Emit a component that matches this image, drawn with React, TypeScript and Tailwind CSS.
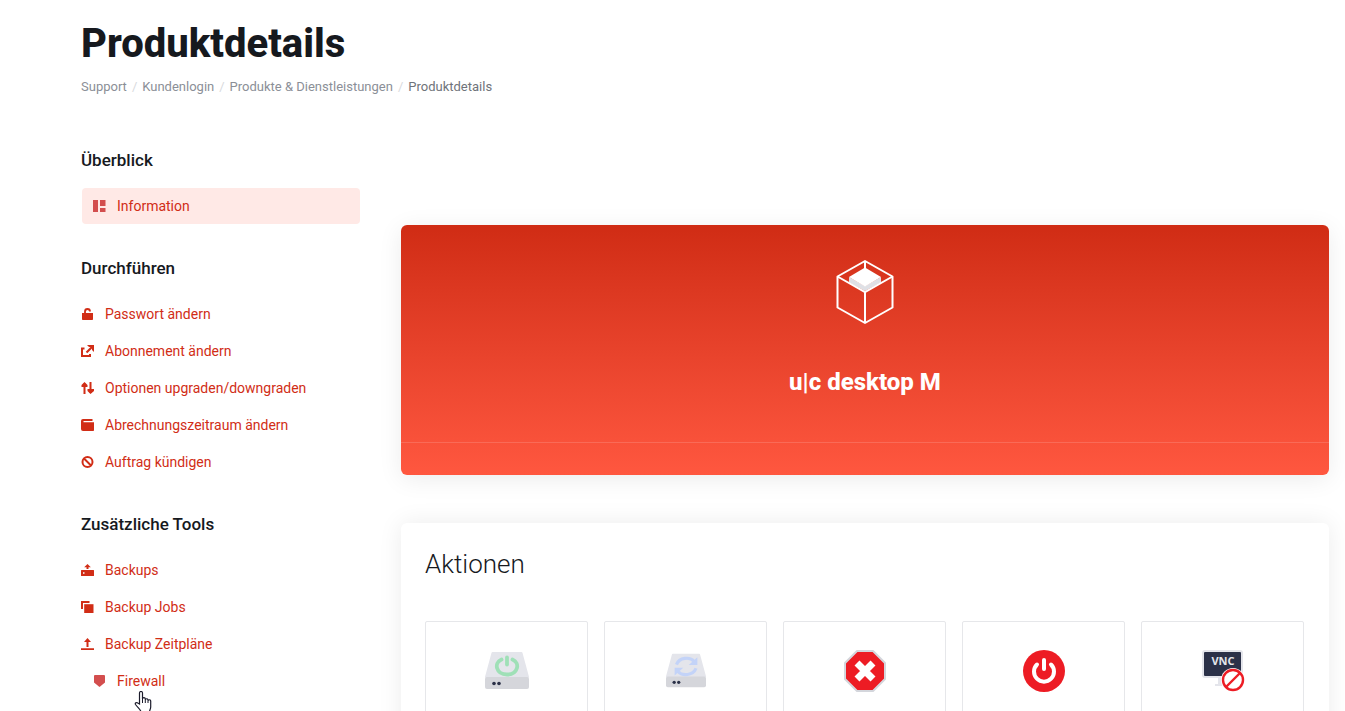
import React from 'react';

interface NavItem {
  label: string;
  icon: React.ReactNode;
  active?: boolean;
  hovered?: boolean;
}

interface NavSection {
  title: string;
  items: NavItem[];
}

const sections: NavSection[] = [
  {
    title: 'Überblick',
    items: [
      {
        label: 'Information',
        active: true,
        icon: <path d="M0 0h5v12H0zM7 0h5.500v6H7zM7 8h5.500v4H7z" />,
      },
    ],
  },
  {
    title: 'Durchführen',
    items: [
      {
        label: 'Passwort ändern',
        icon: (
          <>
            <path d="M1 5h11v6.2a.8.8 0 0 1-.8.8H1.800a.8.8 0 0 1-.8-.8z" />
            <path d="M4 6V3.500a2.500 2.500 0 0 1 5 0" fill="none" stroke="currentColor" strokeWidth="1.800" />
          </>
        ),
      },
      {
        label: 'Abonnement ändern',
        icon: (
          <>
            <path d="M3.500 3.500H1V11h8V9" fill="none" stroke="currentColor" strokeWidth="2" />
            <path d="M5.500 7.500 11 2" fill="none" stroke="currentColor" strokeWidth="2.200" />
            <path d="M6 0h7v7l-2-2V2H8z" />
          </>
        ),
      },
      {
        label: 'Optionen upgraden/downgraden',
        icon: (
          <>
            <path d="M2.500 1.500h2V12h-2zM8.500 0h2v11h-2z" />
            <path d="M3.500 0 6.500 3v2h-6V3zM9.500 12l3.500-3V7H6.500v2z" />
          </>
        ),
      },
      {
        label: 'Abrechnungszeitraum ändern',
        icon: <path d="M2 0h9.500v2H2.500v1.200H13v8a.8.8 0 0 1-.8.8H2a2 2 0 0 1-2-2V2a2 2 0 0 1 2-2z" />,
      },
      {
        label: 'Auftrag kündigen',
        icon: (
          <g fill="none" stroke="currentColor" strokeWidth="2">
            <circle cx="6.500" cy="6" r="5" />
            <path d="m3 2.500 7 7" />
          </g>
        ),
      },
    ],
  },
  {
    title: 'Zusätzliche Tools',
    items: [
      {
        label: 'Backups',
        icon: (
          <>
            <path d="M5.500 2h2v3h-2z" />
            <path d="M6.500 0 9.800 3.200H3.200z" />
            <path
              fillRule="evenodd"
              d="M.5 6h12a.5.5 0 0 1 .5.5v5a.5.5 0 0 1-.5.5H.5a.5.5 0 0 1-.5-.5v-5A.5.5 0 0 1 .5 6zM2 8.200v1.600h1.500V8.200z"
            />
          </>
        ),
      },
      {
        label: 'Backup Jobs',
        icon: (
          <>
            <path d="M0 0h8.500v2H2v6H0z" />
            <path d="M3.200 3.200H12.500V12H3.200z" />
          </>
        ),
      },
      {
        label: 'Backup Zeitpläne',
        icon: (
          <>
            <path d="M5.500 2h2v7h-2zM0 10.300h13V12H0z" />
            <path d="M6.500 0 10 4H3z" />
          </>
        ),
      },
      {
        label: 'Firewall',
        hovered: true,
        icon: <path d="M1 1a1 1 0 0 1 1-1h9a1 1 0 0 1 1 1v6.500L6.500 12 1 7.500z" />,
      },
    ],
  },
];

const breadcrumbs = ['Support', 'Kundenlogin', 'Produkte & Dienstleistungen'];

const DriveBody = () => (
  <>
    <path d="M9.500 3h29L45 27H3z" fill="#e4e5eb" stroke="#e4e5eb" strokeWidth="2" strokeLinejoin="round" />
    <rect x="2" y="27" width="44" height="12" rx="2" fill="#d5d6db" />
    <circle cx="11" cy="33.500" r="1.800" fill="#2b3148" />
    <circle cx="16" cy="33.500" r="1.800" fill="#2b3148" />
  </>
);

const StartIcon = () => (
  <svg viewBox="1 0 46 42" className="h-[42px] w-[46px]">
    <DriveBody />
    <g fill="none" stroke="#9fe0b7" strokeWidth="3.800" strokeLinecap="round">
      <path d="M24 7.500v7" />
      <path d="M18.500 9.500C10.500 13 13 24.500 24 24.500S37.500 13 29.500 9.500" />
    </g>
  </svg>
);

const RebootIcon = () => (
  <svg viewBox="2 0 44 42" className="h-10 w-10">
    <DriveBody />
    <g fill="none" stroke="#c3d3f8" strokeWidth="3.500">
      <path d="M13.500 14C16.500 6 28.500 5 33 10.500" />
      <path d="M35 18C32 26 20 27 15 21.500" />
    </g>
    <path d="M36.500 6v8.500H27zM11.500 26v-8.500H21z" fill="#c3d3f8" />
  </svg>
);

const StopIcon = () => (
  <svg viewBox="0 0 42 42" className="size-[42px]">
    <path d="M13 1h16l12 12v16L29 41H13L1 29V13z" fill="#ed1c24" stroke="#d4d6dc" strokeWidth="2" strokeLinejoin="round" />
    <path d="m13 13 16 16m0-16-16 16" stroke="#fff" strokeWidth="7" />
  </svg>
);

const ShutdownIcon = () => (
  <svg viewBox="0 0 42 42" className="size-[42px]">
    <circle cx="21" cy="21" r="21" fill="#ed1c24" />
    <g fill="none" stroke="#fff" strokeWidth="4" strokeLinecap="round">
      <path d="M21 10v9" />
      <path d="M14 14.500a10 10 0 1 0 14 0" />
    </g>
  </svg>
);

const VncIcon = () => (
  <svg viewBox="0 0 44 44" className="size-11">
    <path d="M17 29h8v5h4v3H14v-2h3z" fill="#e4e5eb" />
    <rect x="1" y="1" width="41" height="28" rx="3" fill="#e4e5eb" />
    <rect x="3" y="3" width="37" height="24" rx="1" fill="#2b3148" />
    <text
      x="22"
      y="16"
      textAnchor="middle"
      fill="#e4e5eb"
      className="font-['Open_Sans',sans-serif] text-[11px] font-bold"
    >
      VNC
    </text>
    <circle cx="32" cy="31" r="12" fill="#fff" />
    <g fill="none" stroke="#ed1c24" strokeWidth="2.400">
      <circle cx="32" cy="31" r="10" />
      <path d="m25 38 14-14" />
    </g>
  </svg>
);

const actions = [
  { name: 'Start', icon: <StartIcon /> },
  { name: 'Reboot', icon: <RebootIcon /> },
  { name: 'Stop', icon: <StopIcon /> },
  { name: 'Shutdown', icon: <ShutdownIcon /> },
  { name: 'VNC', icon: <VncIcon /> },
];

const HandCursor = () => (
  <svg viewBox="0 0 18 22" className="pointer-events-none absolute top-7 left-[53px] h-[22px] w-[18px]">
    <path
      d="M5.500 13V2a1.500 1.500 0 0 1 3 0v6a1.400 1.400 0 0 1 2.800 0v.8a1.400 1.400 0 0 1 2.700 0v1a1.400 1.400 0 0 1 2.700 0V16c0 2-1.200 3-1.200 5H7c0-2-3-4-5.500-7.500-.8-1.500 1-2.500 2.300-1.500z"
      fill="#fff"
      stroke="#1b1b2b"
      strokeWidth="1.200"
    />
    <path d="M8.500 8v4M11.300 8.800V12M14 9.800V12" stroke="#1b1b2b" strokeWidth="1" />
  </svg>
);

const NavLink: React.FC<{ item: NavItem }> = ({ item }) => {
  const inset = item.active || item.hovered;

  return (
    <li className="relative">
      <a
        href="#"
        className={`flex h-9 items-center gap-[11px] rounded text-sm text-[#d12d16] ${
          inset ? 'mx-px pl-[11px]' : ''
        } ${item.active ? 'bg-[#ffe9e6]' : ''}`}
      >
        <svg
          viewBox="0 0 13 12"
          fill="currentColor"
          className={`h-3 w-[13px] shrink-0 ${inset ? 'text-[#d34e4e]' : ''}`}
        >
          {item.icon}
        </svg>
        <span>{item.label}</span>
      </a>
      {item.hovered && <HandCursor />}
    </li>
  );
};

export default function App() {
  return (
    <div className="h-screen overflow-hidden bg-white pr-4 pl-[81px] font-[Roboto,sans-serif] text-[#16191e]">
      <header className="pt-5">
        <h1 className="text-[40px] leading-12 font-extrabold">Produktdetails</h1>
        <nav aria-label="Breadcrumb" className="mt-[9px]">
          <ol className="flex text-[13px] leading-5 text-[#8b8f97]">
            {breadcrumbs.map((crumb) => (
              <li key={crumb} className="flex">
                <a href="#">{crumb}</a>
                <span className="px-[5px] text-[#d8dadd]">/</span>
              </li>
            ))}
            <li className="text-[#6f737a]">Produktdetails</li>
          </ol>
        </nav>
      </header>

      <div className="flex gap-10 pt-[52px]">
        <aside className="w-[280px] shrink-0">
          <nav className="flex flex-col gap-[33px]">
            {sections.map((section) => (
              <section key={section.title}>
                <h2 className="text-[17px] leading-[23px] font-medium">{section.title}</h2>
                <ul className="mt-4 flex flex-col gap-px">
                  {section.items.map((item) => (
                    <NavLink key={item.label} item={item} />
                  ))}
                </ul>
              </section>
            ))}
          </nav>
        </aside>

        <main className="flex min-w-0 flex-1 flex-col gap-12 pt-[76px]">
          <section className="rounded-md bg-linear-to-b from-[#d02c14] to-[#ff573f] shadow-[0_4px_24px_rgba(0,0,0,0.08)]">
            <div className="flex h-[218px] flex-col items-center border-b border-white/15 pt-[34px]">
              <svg viewBox="0 0 60 66" className="h-[66px] w-[60px]" fill="none">
                <g stroke="#fff" strokeWidth="2" strokeLinejoin="round">
                  <path d="M30 2 57.500 17.500v31L30 64 2.500 48.500v-31z" />
                  <path d="M30 2v9" />
                </g>
                <path d="M14 18 30 27l16-9v5.500L30 32l-16-8.500z" fill="#dfe0e5" />
                <path d="M30 8.500 46 18l-16 9.500L14 18z" fill="#fff" />
                <path d="M2.500 17.500 30 33l27.500-15.500M30 33v31" stroke="#fff" strokeWidth="2" />
              </svg>
              <h2 className="mt-[41px] text-2xl leading-8 font-extrabold text-white">u|c desktop M</h2>
            </div>
            <div className="h-8" />
          </section>

          <section className="rounded-md bg-white py-6 pr-[25px] pl-6 shadow-[0_0_24px_rgba(0,0,0,0.08)]">
            <h2 className="text-[26px] leading-[34px] font-light">Aktionen</h2>
            <div className="mt-10 grid grid-cols-5 gap-4">
              {actions.map((action) => (
                <button
                  key={action.name}
                  type="button"
                  aria-label={action.name}
                  className="flex h-[100px] items-center justify-center rounded-xs border border-[#e6e7ea]"
                >
                  {action.icon}
                </button>
              ))}
            </div>
          </section>
        </main>
      </div>
    </div>
  );
}
